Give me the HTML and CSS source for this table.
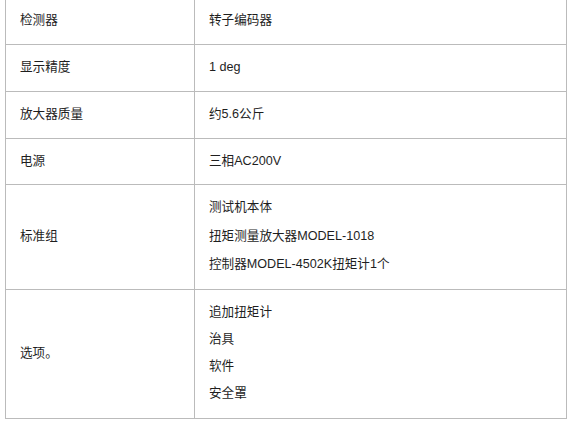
FILE: index.html
```html
<!DOCTYPE html>
<html lang="zh-CN">
<head>
<meta charset="utf-8">
<title>规格</title>
<link rel="stylesheet" href="styles.css">
</head>
<body>
<div class="page">
  <table class="spec">
    <tr>
      <td class="key">检测器</td>
      <td class="val">转子编码器</td>
    </tr>
    <tr>
      <td class="key">显示精度</td>
      <td class="val">1 deg</td>
    </tr>
    <tr>
      <td class="key">放大器质量</td>
      <td class="val">约5.6公斤</td>
    </tr>
    <tr>
      <td class="key">电源</td>
      <td class="val">三相AC200V</td>
    </tr>
    <tr>
      <td class="key">标准组</td>
      <td class="val multi wide">
        <p>测试机本体</p>
        <p>扭矩测量放大器MODEL-1018</p>
        <p>控制器MODEL-4502K扭矩计1个</p>
      </td>
    </tr>
    <tr>
      <td class="key">选项。</td>
      <td class="val multi">
        <p>追加扭矩计</p>
        <p>治具</p>
        <p>软件</p>
        <p>安全罩</p>
      </td>
    </tr>
  </table>
</div>
</body>
</html>
```
FILE: styles.css
```css
html, body {
  margin: 0;
  padding: 0;
  background: #ffffff;
}

.page {
  padding: 0 0 0 5px;
}

.spec {
  margin-top: -2.75px;
  width: 562px;
  table-layout: fixed;
  border-collapse: separate;
  border-spacing: 0;
  border-top: 1px solid #bbbbbb;
  border-left: 1px solid #bbbbbb;
  font-family: "Liberation Sans", "Noto Sans CJK SC", sans-serif;
  font-size: 12.6px;
  line-height: 15.75px;
  color: #1e1e1e;
}

.spec td {
  box-sizing: border-box;
  border-right: 1px solid #bbbbbb;
  border-bottom: 1px solid #bbbbbb;
  padding: 15px 14px;
  vertical-align: middle;
  text-align: left;
}

.spec .key {
  width: 189px;
}

.spec .multi {
  padding-top: 14px;
  padding-bottom: 17px;
  line-height: 16px;
}

.spec .multi p {
  margin: 0 0 11px 0;
}

.spec .multi p:last-child {
  margin-bottom: 0;
}

.spec .wide {
  padding-bottom: 16.75px;
}

.spec .wide p {
  margin-bottom: 12.5px;
}

.spec .wide p:last-child {
  margin-bottom: 0;
}
```
